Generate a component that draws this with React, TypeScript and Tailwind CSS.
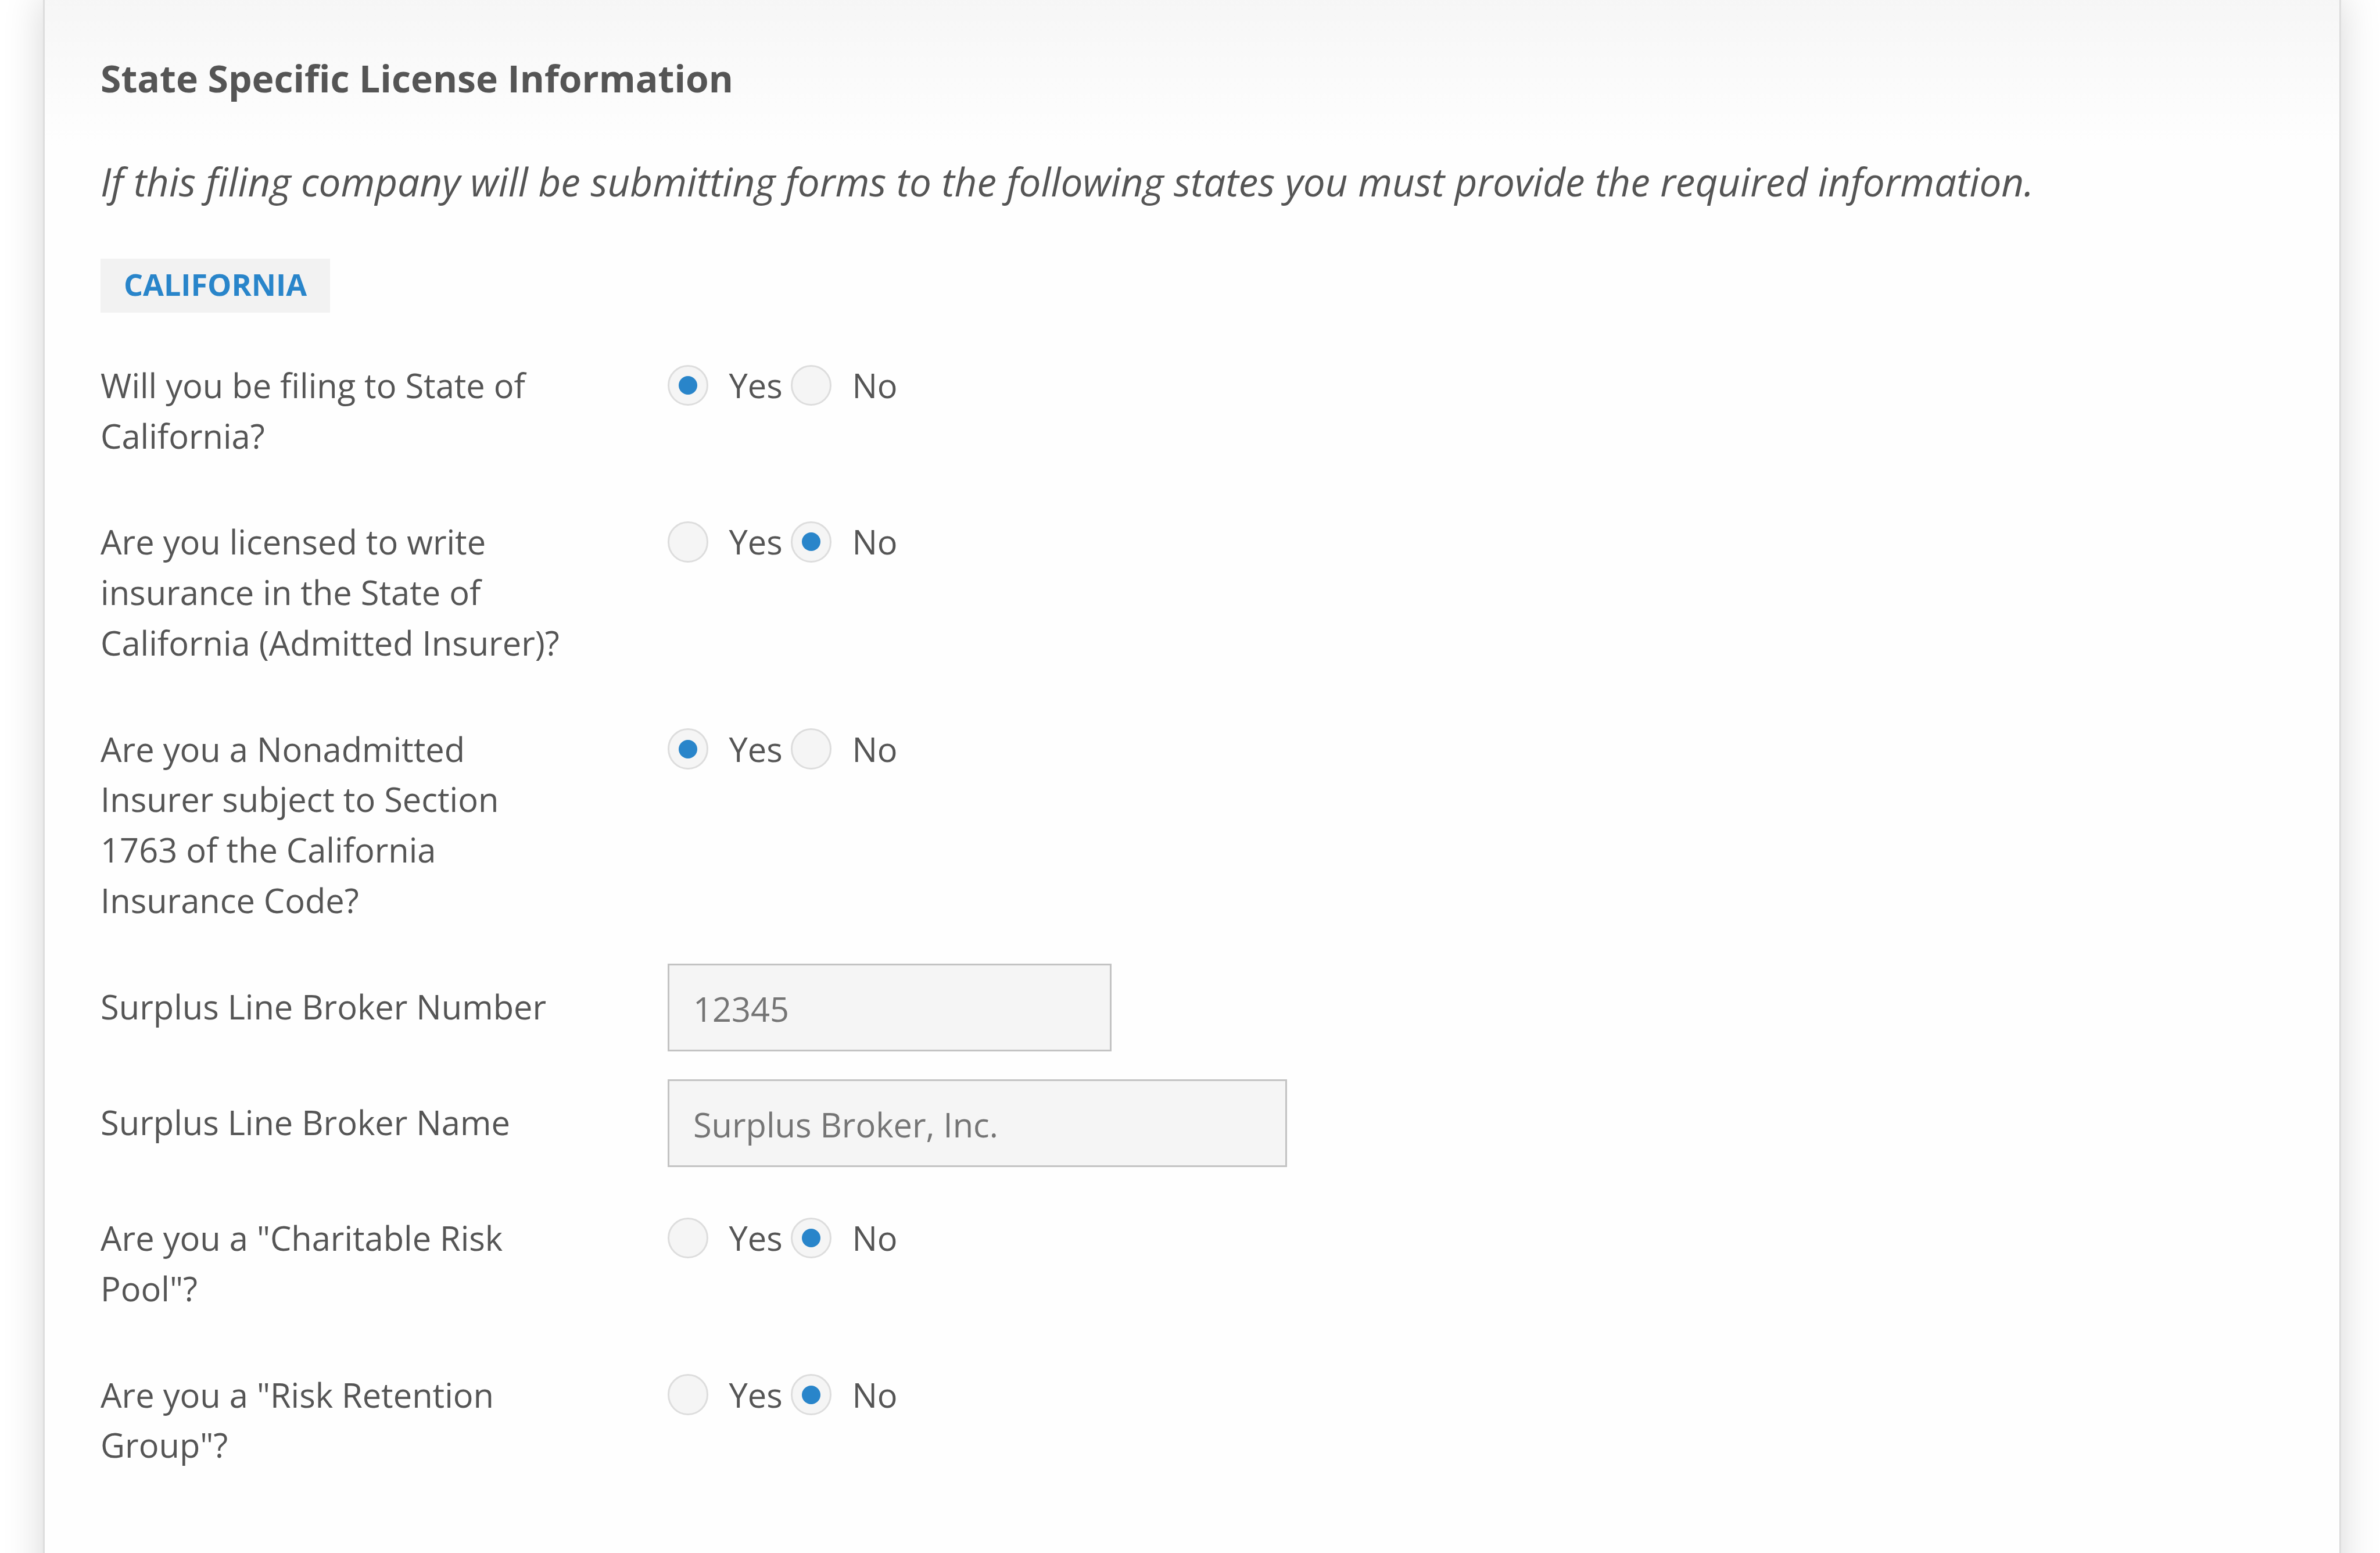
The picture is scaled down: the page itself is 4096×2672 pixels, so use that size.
import { clsx } from "clsx";

interface RadioOptionProps {
  label: string;
  checked: boolean;
}

interface RadioRowProps {
  question: string;
  answer: "Yes" | "No";
  className?: string;
}

interface TextRowProps {
  label: string;
  value: string;
  inputClassName: string;
}

function RadioOption({ label, checked }: RadioOptionProps) {
  return (
    <label className="flex items-start">
      <span className="mt-[7.7px] mr-[35.1px] flex size-[70.6px] shrink-0 items-center justify-center rounded-full border-[3px] border-[#dddddd] bg-[#f5f5f5]">
        {checked && (
          <span className="size-[32px] rounded-full bg-[#2985ca]" />
        )}
      </span>
      {label}
    </label>
  );
}

function RadioRow({ question, answer, className }: RadioRowProps) {
  return (
    <div className={clsx("flex", className)}>
      <p className="mr-[165.3px] w-[810.5px] shrink-0">{question}</p>
      <div className="flex">
        <div className="w-[211.8px]">
          <RadioOption label="Yes" checked={answer === "Yes"} />
        </div>
        <RadioOption label="No" checked={answer === "No"} />
      </div>
    </div>
  );
}

function TextRow({ label, value, inputClassName }: TextRowProps) {
  return (
    <div className="flex h-[199px] items-start">
      <p className="w-[975.8px] shrink-0 pt-[31px]">{label}</p>
      <input
        readOnly
        value={value}
        className={clsx(
          "h-[151px] border-[3px] border-[#c3c3c3] bg-[#f5f5f5] px-[41px] pt-[4px] text-[#757575] outline-none",
          inputClassName,
        )}
      />
    </div>
  );
}

export default function App() {
  return (
    <main className="h-[2672px] w-[4096px] overflow-hidden bg-white pl-[73.8px] font-['Open_Sans',sans-serif] text-[57.78px] leading-[86.67px] text-[#555555]">
      <section className="-mt-[6px] h-[2900px] w-[3954.8px] border-[3px] border-[#dddddd] bg-[#fefefe] bg-linear-to-b from-[#f6f6f6] to-[#fefefe] to-[255px] px-[96.3px] pt-[89px] shadow-[0_0_64px_rgba(0,0,0,0.16)]">
        <h2 className="h-[176px] text-[64.2px] leading-[96px] font-bold">
          State Specific License Information
        </h2>
        <p className="h-[182.6px] text-[67.41px] leading-[101px] whitespace-nowrap italic">
          If this filing company will be submitting forms to the following
          states you must provide the required information.
        </p>
        <h3 className="mb-[82.2px] flex h-[93.1px] w-[395px] items-center justify-center bg-[#f2f2f2] pb-[4px] text-[52px] font-bold text-[#2985ca]">
          CALIFORNIA
        </h3>

        <RadioRow
          question="Will you be filing to State of California?"
          answer="Yes"
          className="h-[269.6px]"
        />
        <RadioRow
          question="Are you licensed to write insurance in the State of California (Admitted Insurer)?"
          answer="No"
          className="h-[356.3px]"
        />
        <RadioRow
          question="Are you a Nonadmitted Insurer subject to Section 1763 of the California Insurance Code?"
          answer="Yes"
          className="h-[412.4px]"
        />
        <TextRow
          label="Surplus Line Broker Number"
          value="12345"
          inputClassName="w-[764px]"
        />
        <TextRow
          label="Surplus Line Broker Name"
          value="Surplus Broker, Inc."
          inputClassName="w-[1065.7px]"
        />
        <RadioRow
          question={'Are you a "Charitable Risk Pool"?'}
          answer="No"
          className="mt-[30.8px] h-[269.6px]"
        />
        <RadioRow
          question={'Are you a "Risk Retention Group"?'}
          answer="No"
          className="h-[269.6px]"
        />
      </section>
    </main>
  );
}
